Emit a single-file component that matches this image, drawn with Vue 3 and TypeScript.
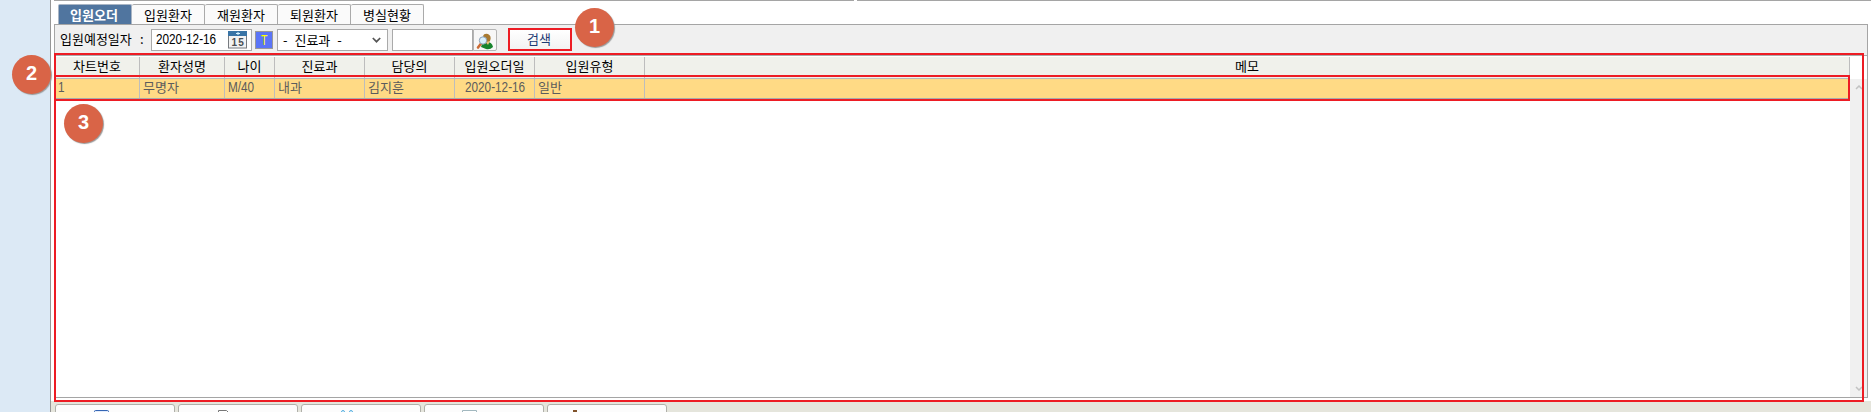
<script setup lang="ts">
interface Column {
  label: string
  value: string
  cls: string
  latin?: boolean
}

const tabs: string[] = ['입원오더', '입원환자', '재원환자', '퇴원환자', '병실현황']

const columns: Column[] = [
  { label: '차트번호', value: '1', cls: 'chart', latin: true },
  { label: '환자성명', value: '무명자', cls: 'name' },
  { label: '나이', value: 'M/40', cls: 'age', latin: true },
  { label: '진료과', value: '내과', cls: 'dept' },
  { label: '담당의', value: '김지훈', cls: 'doctor' },
  { label: '입원오더일', value: '2020-12-16', cls: 'date', latin: true },
  { label: '입원유형', value: '일반', cls: 'kind' },
  { label: '메모', value: '', cls: 'memo' },
]

const actions: string[] = ['monitor', 'document', 'people', 'card', 'person']
</script>

<template>
  <div class="screen">
    <aside class="side"></aside>
    <main class="main">
      <div class="topline"><i></i><i></i></div>
      <nav class="tabs">
        <div v-for="(tab, i) in tabs" :key="tab" class="tab" :class="{ active: i === 0 }">{{ tab }}</div>
      </nav>
      <section class="panel">
        <div class="toolbar">
          <span class="caption">입원예정일자</span><span class="colon">:</span>
          <div class="field datefield">
            <span class="latin">2020-12-16</span>
            <svg class="calendar" width="20" height="18" viewBox="0 0 20 18">
              <rect x=".5" y=".5" width="18" height="16.5" fill="#f3f3f3" stroke="#777b80" />
              <rect x="0" y="0" width="19" height="5" fill="#3974a6" />
              <path d="M8 2.5h4M10 1v3" stroke="#d7f3ff" />
              <text x="3.4" y="15" textLength="12.5">15</text>
            </svg>
          </div>
          <div class="today"><span>T</span></div>
          <div class="field select">
            <span>- 진료과 -</span>
            <svg width="9" height="6" viewBox="0 0 9 6"><path d="M.8 1l3.7 3.700L8.200 1" fill="none" stroke="#555" stroke-width="1.7" /></svg>
          </div>
          <div class="field query"></div>
          <div class="lookup">
            <svg width="18" height="17" viewBox="0 0 18 17">
              <path d="M5 14q1-5 6-5 5 0 6 5-3 3-7 2z" fill="#16832c" />
              <path d="M7 3q1-3 5-2 4 2 2 7l-3 3-3-3z" fill="#a8792f" />
              <path d="M10 9l2 3 2-4z" fill="#efc27b" />
              <path d="M5.500 10L2 14.500" stroke="#cc6b35" stroke-width="2.6" stroke-linecap="round" />
              <circle cx="7" cy="7.500" r="3.700" fill="#d9f0fb" stroke="#899eb4" />
            </svg>
          </div>
          <div class="search">검색</div>
        </div>
        <div class="grid">
          <div class="gridbody">
            <div class="row head">
              <div v-for="col in columns" :key="col.cls" class="cell" :class="col.cls">{{ col.label }}</div>
            </div>
            <div class="row data">
              <div v-for="col in columns" :key="col.cls" class="cell" :class="col.cls"><span :class="{ latin: col.latin }">{{ col.value }}</span></div>
            </div>
          </div>
          <div class="scroll">
            <svg width="8" height="5" viewBox="0 0 8 5"><path d="M1 4l3-3 3 3" /></svg>
            <svg width="8" height="5" viewBox="0 0 8 5"><path d="M1 1l3 3 3-3" /></svg>
          </div>
        </div>
      </section>
      <footer class="actions">
        <div v-for="action in actions" :key="action" class="action">
          <svg :class="action" width="18" height="6" viewBox="0 0 18 6">
            <path v-if="action === 'monitor'" d="M1.500 6V2.500q0-1 1-1h12q1 0 1 1V6" fill="#e3ecfb" stroke="#3465b4" />
            <path v-else-if="action === 'document'" d="M1.500 6V1.500h8l2 2V6" fill="#fff" stroke="#777" />
            <path v-else-if="action === 'people'" d="M1.500 5V3q0-1.500 1.500-1.500T4.500 3v2M9.500 5V3q0-1.500 1.500-1.500T12.500 3v2" fill="#e0f5ff" stroke="#56aede" />
            <path v-else-if="action === 'card'" d="M.5 6V1.500h14V6" fill="#fff" stroke="#a2b8bf" />
            <path v-else d="M1 1h4v2h2v3H3V3H1z" fill="#80522b" />
          </svg>
        </div>
      </footer>
    </main>
    <div class="frame outer"></div>
    <div class="frame selected"></div>
    <div class="badge one">1</div>
    <div class="badge two">2</div>
    <div class="badge three">3</div>
  </div>
</template>

<style>
body { margin: 0; overflow: hidden; }
</style>

<style scoped>
* { box-sizing: border-box; }
.screen { position: relative; display: flex; width: 1871px; height: 412px; overflow: hidden; background: #fff; color: #000; font: 13px/18px "Noto Sans CJK KR", sans-serif; white-space: nowrap; }
.side { width: 51px; background: #dce9f5; border-right: 1px solid #969696; }
.main { flex: 1; display: flex; flex-direction: column; }
.topline { flex: none; display: flex; gap: 3px; height: 1px; padding-left: 3px; }
.topline i { background: #a5a5a5; flex: 1; }
.topline i:first-child { flex: 0 0 800px; }
.tabs { flex: none; display: flex; height: 23px; padding: 3px 0 0 7px; }
.tab { width: 73px; height: 20px; border: 1px solid #aaa; border-left: 0; border-bottom: 0; background: #fafafa; text-align: center; line-height: 20px; border-radius: 2px 2px 0 0; }
.tab.active { width: 74px; padding-right: 2px; background: #50759f; border-color: #a9b5c4; border-left: 1px solid #a9b5c4; color: #fff; font-weight: 700; }
.panel { flex: none; display: flex; flex-direction: column; width: 1814px; height: 374px; margin-left: 3px; border: 1px solid #a5a5a5; }
.toolbar { flex: none; display: flex; height: 30px; background: #f0f0f0; padding: 4px 0 0 5px; line-height: 20px; }
.caption { width: 80px; }
.colon { width: 11px; }
.field { height: 22px; border: 1px solid #aaa; background: #fff; }
.latin { display: inline-block; font-family: "Liberation Sans", sans-serif; font-size: 14px; transform: scaleX(.84); transform-origin: 0 50%; }
.datefield { width: 101px; display: flex; padding-left: 4px; line-height: 19px; }
.datefield .latin { width: 72px; }
.calendar { margin-top: 1px; }
.calendar text { font: bold 10px "Liberation Sans", sans-serif; fill: #4a4e53; }
.today { width: 18px; height: 18px; margin: 2px 4px 0 3px; background: #5b75f7; border: 1px solid #999; color: #ff0; font: 14px/16px "Liberation Sans", sans-serif; text-align: center; }
.today span { display: inline-block; transform: scaleX(.75); }
.select { width: 111px; display: flex; justify-content: space-between; align-items: center; padding: 0 6px 0 5px; word-spacing: 4px; }
.query { width: 81px; margin-left: 4px; }
.lookup { width: 24px; height: 22px; border: 1px solid #b5b5b5; border-radius: 0 2px 2px 0; background: #f7f7f7; padding: 3px 0 0 2px; }
.lookup svg, .calendar { display: block; }
.search { width: 64px; height: 23px; margin: -1px 0 0 11px; border: 2px solid #ed1c24; color: #1e3c74; background: linear-gradient(#fff, #f2f2f2); text-align: center; line-height: 18px; padding-right: 2px; }
.grid { flex: 1; display: flex; border-top: 1px solid #aaa; }
.gridbody { width: 1795px; }
.row { display: flex; }
.head { height: 23px; background: #f0f1eb; border-top: 1px solid #fff; border-bottom: 1px solid #b8b8b8; line-height: 17px; text-align: center; }
.data { height: 20px; background: #ffda85; color: #5c5c5c; line-height: 15px; border-bottom: 1px solid #aaa; }
.cell { border-right: 1px solid #bdbdbd; }
.data .cell { padding-left: 3px; }
.chart { width: 85px; }
.name { width: 85px; }
.age { width: 50px; }
.dept { width: 90px; }
.doctor { width: 90px; }
.date { width: 80px; }
.data .date { padding-left: 10px; }
.kind { width: 110px; }
.memo { flex: 1; }
.scroll { flex: 1; margin-top: 23px; background: #f0f0f0; display: flex; flex-direction: column; justify-content: space-between; padding: 6px 0 6px 5px; }
.scroll path { fill: none; stroke: #c2c2c2; stroke-width: 1.5; }
.actions { flex: 1; display: flex; gap: 3px; padding: 3px 0 0 4px; margin-top: 3px; background: #e5e5dc; overflow: hidden; }
.action { width: 120px; height: 20px; border: 1px solid #b0b0aa; border-radius: 3px; background: #fcfcfc; }
.action svg { display: block; margin: 4px 0 0 37px; }
.action .document { margin-left: 38px; }
.action .people { margin-left: 38px; }
.action .person { margin-left: 24px; }
.frame { position: absolute; border: 2px solid #ed1c24; }
.outer { left: 54px; top: 53px; width: 1810px; height: 349px; }
.selected { left: 54px; top: 75px; width: 1796px; height: 26px; }
.badge { position: absolute; width: 39px; height: 39px; border-radius: 50%; background: #d96447; color: #fff; box-shadow: 1px 1px 1px #999; font: bold 20px/37px "Liberation Sans", sans-serif; text-align: center; }
.one { left: 575px; top: 8px; }
.two { left: 12px; top: 55px; }
.three { left: 64px; top: 104px; }
</style>
